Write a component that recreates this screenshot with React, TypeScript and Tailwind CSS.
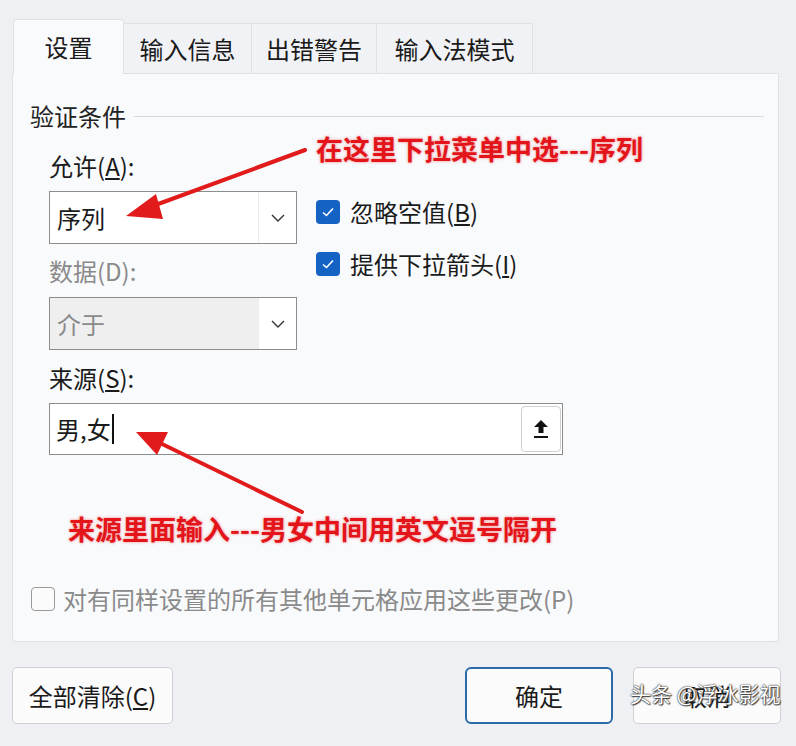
import React from "react";

const font = { fontFamily: '"Noto Sans CJK SC", "Noto Sans", sans-serif' };

function Chevron() {
  return (
    <svg width="16" height="10" viewBox="0 0 16 10" fill="none">
      <path d="M2 2 L8 8 L14 2" stroke="#333" strokeWidth="1.4" />
    </svg>
  );
}

function Check() {
  return (
    <div className="w-[24px] h-[24px] rounded-[4px] bg-[#1462c4] flex items-center justify-center">
      <svg width="14" height="12" viewBox="0 0 14 12" fill="none">
        <path d="M2 6.5 L5.5 9.5 L12 2.5" stroke="#fff" strokeWidth="1.6" />
      </svg>
    </div>
  );
}

export default function App() {
  return (
    <div
      className="relative w-[796px] h-[746px] bg-[#eff0f3] overflow-hidden text-[#1a1a1a]"
      style={font}
    >
      {/* tabs */}
      <div className="flex items-end pl-[13px] pt-[19px] h-[73px]">
        <div className="w-[111px] h-[55px] bg-[#f9fafc] border border-b-0 border-[#dfe1e5] rounded-t-[4px] flex items-center justify-center text-[24px] relative z-10 -mb-px">
          设置
        </div>
        <div className="w-[128px] h-[50px] bg-[#f1f2f5] border border-b-0 border-l-0 border-[#dfe1e5] flex items-center justify-center text-[24px]">
          输入信息
        </div>
        <div className="w-[125px] h-[50px] bg-[#f1f2f5] border border-b-0 border-l-0 border-[#dfe1e5] flex items-center justify-center text-[24px]">
          出错警告
        </div>
        <div className="w-[156px] h-[50px] bg-[#f1f2f5] border border-b-0 border-l-0 border-[#dfe1e5] flex items-center justify-center text-[24px]">
          输入法模式
        </div>
      </div>

      {/* panel */}
      <div className="ml-[12px] w-[767px] h-[569px] bg-[#f9fafc] border border-[#dfe1e5] rounded-b-[4px] pl-[17px] pr-[14px]">
        <div className="flex items-center h-[44px] mt-[20px]">
          <span className="text-[24px] text-[#222] leading-none">验证条件</span>
          <div className="flex-1 ml-[8px] h-px bg-[#d8dade]" />
        </div>

        <div className="flex mt-[15px]">
          <div className="ml-[19px] w-[248px]">
            <div className="text-[24px] leading-[26px] h-[26px]">
              允许(<span className="underline underline-offset-2">A</span>):
            </div>
            <div className="mt-[12px] h-[53px] bg-white border border-[#8d8d8d] flex">
              <div className="flex-1 flex items-center pl-[7px] text-[24px]">序列</div>
              <div className="w-[38px] border-l border-[#ececec] flex items-center justify-center">
                <Chevron />
              </div>
            </div>
            <div className="mt-[14px] text-[24px] leading-[26px] text-[#8a8a8a]">数据(D):</div>
            <div className="mt-[13px] h-[53px] bg-[#efefef] border border-[#8d8d8d] flex">
              <div className="flex-1 flex items-center pl-[7px] text-[24px] text-[#8a8a8a]">介于</div>
              <div className="w-[38px] bg-white border-l border-[#ececec] flex items-center justify-center">
                <Chevron />
              </div>
            </div>
          </div>

          <div className="ml-[19px] mt-[47px] flex flex-col gap-[28px]">
            <div className="flex items-center gap-[10px] text-[24px] leading-none">
              <Check />
              <span>
                忽略空值(<span className="underline underline-offset-2">B</span>)
              </span>
            </div>
            <div className="flex items-center gap-[10px] text-[24px] leading-none">
              <Check />
              <span>
                提供下拉箭头(<span className="underline underline-offset-2">I</span>)
              </span>
            </div>
          </div>
        </div>

        <div className="ml-[19px] mt-[15px] text-[24px] leading-[26px]">
          来源(<span className="underline underline-offset-2">S</span>):
        </div>
        <div className="ml-[19px] mt-[12px] w-[514px] h-[52px] bg-white border border-[#8d8d8d] flex items-center pr-[1px]">
          <div className="flex-1 flex items-center pl-[6px] text-[24px]">
            男,女<span className="inline-block w-[2px] h-[30px] bg-[#111] ml-[1px]" />
          </div>
          <div className="w-[40px] h-[46px] border border-[#cfcfcf] rounded-[4px] flex items-center justify-center bg-white">
            <svg width="18" height="22" viewBox="0 0 18 22">
              <path d="M9 2 L2 9 L6.5 9 L6.5 15 L11.5 15 L11.5 9 L16 9 Z" fill="#111" />
              <rect x="2" y="18" width="14" height="2" fill="#111" />
            </svg>
          </div>
        </div>

        <div className="mt-[132px] flex items-center gap-[8px] text-[24px] text-[#8a8a8a] leading-none">
          <div className="w-[24px] h-[24px] ml-[1px] rounded-[4px] border border-[#9a9a9a] bg-[#fbfbfb]" />
          <span>对有同样设置的所有其他单元格应用这些更改(P)</span>
        </div>
      </div>

      {/* buttons */}
      <div className="flex mt-[25px] pl-[12px] pr-[15px]">
        <div className="w-[161px] h-[57px] bg-[#fbfbfb] border border-[#d0d0d0] rounded-[5px] flex items-center justify-center text-[24px]">
          全部清除(<span className="underline underline-offset-2">C</span>)
        </div>
        <div className="flex-1" />
        <div className="w-[148px] h-[57px] bg-[#fbfbfb] border-2 border-[#2a6aa8] rounded-[6px] flex items-center justify-center text-[24px]">
          确定
        </div>
        <div className="ml-[20px] w-[148px] h-[57px] bg-[#fbfbfb] border border-[#d0d0d0] rounded-[5px] flex items-center justify-center text-[24px]">
          取消
        </div>
      </div>

      {/* annotations */}
      <svg className="absolute left-0 top-0 pointer-events-none" width="796" height="746">
        <g stroke="#e11b1b" strokeWidth="4" strokeLinecap="round" fill="#e11b1b">
          <line x1="305" y1="150" x2="150" y2="207" />
          <polygon points="126,216 156,194 163,219" stroke="none" />
          <line x1="302" y1="512" x2="160" y2="443" />
          <polygon points="136,432 168,432 157,455" stroke="none" />
        </g>
      </svg>
      <div
        className="absolute left-[316px] top-[135px] text-[27px] font-bold text-[#e3151a] leading-none"
        style={{ textShadow: "0 0 3px rgba(230,40,40,0.55)" }}
      >
        在这里下拉菜单中选---序列
      </div>
      <div
        className="absolute left-[68px] top-[515px] text-[27px] font-bold text-[#e3151a] leading-none"
        style={{ textShadow: "0 0 3px rgba(230,40,40,0.55)" }}
      >
        来源里面输入---男女中间用英文逗号隔开
      </div>
      <div
        className="absolute left-[630px] top-[683px] text-[21px] text-white leading-none"
        style={{ textShadow: "0 0 1px #333, 0 0 2px #333, 1px 1px 1px #444" }}
      >
        头条 @浮冰影视
      </div>
    </div>
  );
}
